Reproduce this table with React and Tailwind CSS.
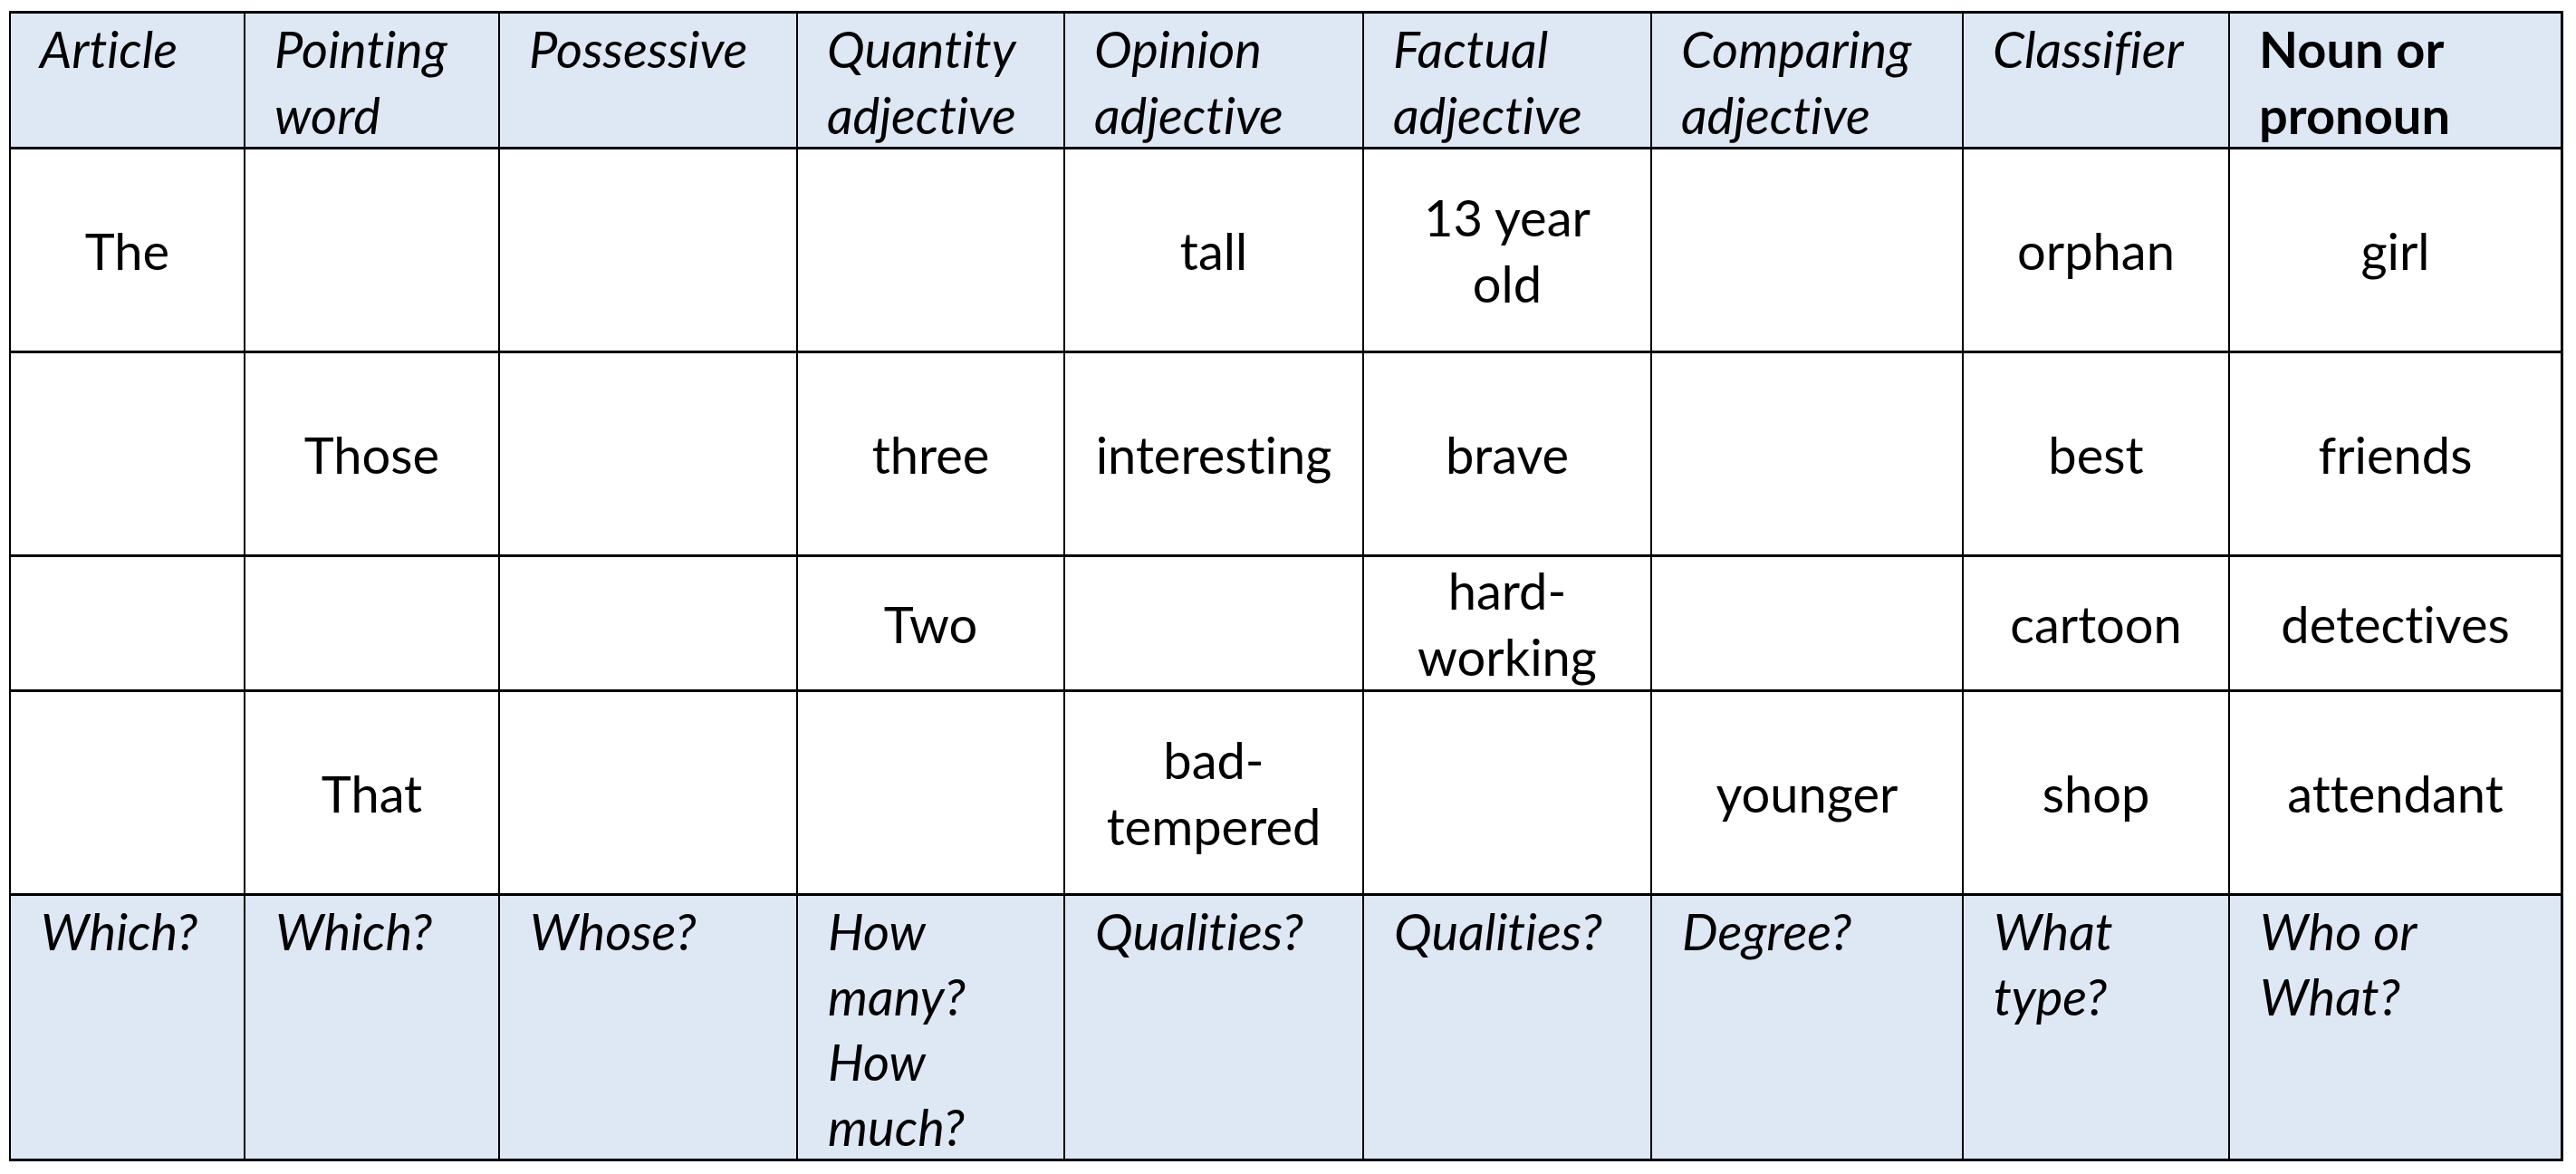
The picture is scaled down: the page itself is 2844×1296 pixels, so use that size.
import React from "react";

const headers = [
  ["Article"],
  ["Pointing", "word"],
  ["Possessive"],
  ["Quantity", "adjective"],
  ["Opinion", "adjective"],
  ["Factual", "adjective"],
  ["Comparing", "adjective"],
  ["Classifier"],
];

const rows = [
  [["The"], [], [], [], ["tall"], ["13 year", "old"], [], ["orphan"], ["girl"]],
  [[], ["Those"], [], ["three"], ["interesting"], ["brave"], [], ["best"], ["friends"]],
  [[], [], [], ["Two"], [], ["hard-", "working"], [], ["cartoon"], ["detectives"]],
  [[], ["That"], [], [], ["bad-", "tempered"], [], ["younger"], ["shop"], ["attendant"]],
];

const questions = [
  ["Which?"],
  ["Which?"],
  ["Whose?"],
  ["How", "many?", "How", "much?"],
  ["Qualities?"],
  ["Qualities?"],
  ["Degree?"],
  ["What", "type?"],
  ["Who or", "What?"],
];

function Lines({ lines }) {
  return lines.map((l, i) => <div key={i}>{l}</div>);
}

export default function App() {
  return (
    <div className="min-h-screen bg-white pt-[12px] pl-[10px] font-[family-name:Lato,sans-serif] text-[56px] leading-[73px] text-black [font-variant-ligatures:none]">
      <div className="grid w-fit grid-cols-[257px_279px_327px_293px_328px_316px_342px_292px_365px] grid-rows-[147px_222px_222px_146px_222px_290px] gap-x-[2px] gap-y-[3px] bg-black pt-[3px] pl-[2px] pr-[3px] pb-[3px]">
        {headers.map((h, i) => (
          <div key={"h" + i} className="bg-[#dee8f4] pl-[32px] pt-[2px] italic whitespace-nowrap">
            <Lines lines={h} />
          </div>
        ))}
        <div className="bg-[#dee8f4] pl-[32px] pt-[2px] font-bold whitespace-nowrap">
          <div>Noun or</div>
          <div>pronoun</div>
        </div>

        {rows.map((r, ri) =>
          r.map((cell, ci) => (
            <div
              key={"r" + ri + "-" + ci}
              className="flex flex-col items-center justify-center bg-white text-center whitespace-nowrap"
            >
              <Lines lines={cell} />
            </div>
          ))
        )}

        {questions.map((q, i) => (
          <div key={"q" + i} className="bg-[#dee8f4] pl-[33px] pt-[3px] leading-[72px] italic whitespace-nowrap">
            <Lines lines={q} />
          </div>
        ))}
      </div>
    </div>
  );
}
